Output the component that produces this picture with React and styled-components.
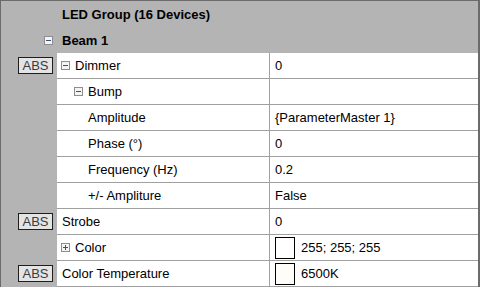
import React from 'react';
import styled, { createGlobalStyle } from 'styled-components';

const GlobalStyle = createGlobalStyle`
  body {
    margin: 0;
    background: #ffffff;
    font-family: 'Liberation Sans', Arial, sans-serif;
    font-size: 13px;
    color: #000;
  }
`;

const Grid = styled.div`
  width: 480px;
  height: 287px;
  box-sizing: border-box;
  overflow: hidden;
  background: #b4b4b4;
  border-top: 1px solid #6b6b6b;
  border-left: 1px solid #6b6b6b;
  border-right: 2px solid #6b6b6b;
`;

const HeaderRow = styled.div`
  display: flex;
  align-items: center;
  height: 26px;
  padding-left: ${props => props.indent}px;
  font-weight: bold;
  white-space: nowrap;
`;

const Row = styled.div`
  display: grid;
  grid-template-columns: 56px 213px 1fr;
  height: 26px;
`;

const Gutter = styled.div`
  display: flex;
  align-items: center;
  justify-content: flex-end;
  padding-right: 4px;
`;

const AbsButton = styled.div`
  width: 33px;
  height: 15px;
  border: 1px solid #1e1e1e;
  background: #e4e4e4;
  color: #3c3c3c;
  font-size: 13px;
  line-height: 15px;
  text-align: center;
  margin-top: -1px;
`;

const NameCell = styled.div`
  display: flex;
  align-items: center;
  background: #fff;
  border-bottom: 1px solid #a0a0a0;
  border-right: 1px solid #a0a0a0;
  padding-left: ${props => props.pad}px;
  white-space: nowrap;
`;

const ValueCell = styled.div`
  display: flex;
  align-items: center;
  background: #fff;
  border-bottom: 1px solid #a0a0a0;
  padding-left: 5px;
  white-space: nowrap;
`;

const Swatch = styled.div`
  width: 18px;
  height: 20px;
  border: 1px solid #000;
  background: ${props => props.color};
  margin-right: 6px;
`;

const ExpanderIcon = styled.svg`
  flex: none;
  margin-right: ${props => props.gap}px;
`;

const Expander = ({ open, gap = 5 }) => (
  <ExpanderIcon width="9" height="9" viewBox="0 0 9 9" gap={gap}>
    <rect x="0.5" y="0.5" width="8" height="8" fill="#f4f4f4" stroke="#8e8e8e" />
    <line x1="2" y1="4.5" x2="7" y2="4.5" stroke="#3d4f7a" />
    {!open && <line x1="4.5" y1="2" x2="4.5" y2="7" stroke="#3d4f7a" />}
  </ExpanderIcon>
);

const rows = [
  { name: 'Dimmer', value: '0', level: 0, abs: true, expander: 'open' },
  { name: 'Bump', value: '', level: 1, expander: 'open' },
  { name: 'Amplitude', value: '{ParameterMaster 1}', level: 2 },
  { name: 'Phase (°)', value: '0', level: 2 },
  { name: 'Frequency (Hz)', value: '0.2', level: 2 },
  { name: '+/- Ampliture', value: 'False', level: 2 },
  { name: 'Strobe', value: '0', level: 0, abs: true },
  { name: 'Color', value: '255; 255; 255', level: 0, expander: 'closed', swatch: '#ffffff' },
  { name: 'Color Temperature', value: '6500K', level: 0, abs: true, swatch: '#fffdf8' },
];

const PropertyRow = ({ row }) => {
  const pad = row.expander ? 4 + 13 * row.level : 5 + 13 * row.level;
  return (
    <Row>
      <Gutter>{row.abs && <AbsButton>ABS</AbsButton>}</Gutter>
      <NameCell pad={pad}>
        {row.expander && <Expander open={row.expander === 'open'} />}
        {row.name}
      </NameCell>
      <ValueCell>
        {row.swatch && <Swatch color={row.swatch} />}
        {row.value}
      </ValueCell>
    </Row>
  );
};

export default function App() {
  return (
    <>
      <GlobalStyle />
      <Grid>
        <HeaderRow indent={61}>LED Group (16 Devices)</HeaderRow>
        <HeaderRow indent={43}>
          <Expander open gap={9} />
          Beam 1
        </HeaderRow>
        {rows.map(row => (
          <PropertyRow key={row.name} row={row} />
        ))}
      </Grid>
    </>
  );
}
